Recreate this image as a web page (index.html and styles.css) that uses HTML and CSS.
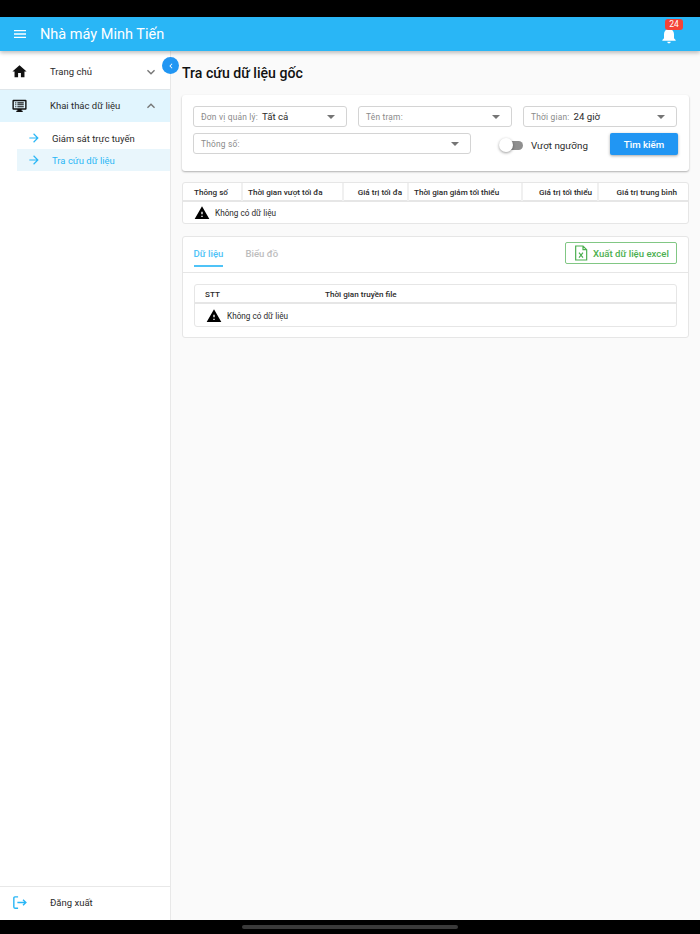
FILE: index.html
```html
<!DOCTYPE html>
<html lang="vi">
<head>
    <meta charset="UTF-8">
    <title>Tra cứu dữ liệu gốc</title>
    <link rel="stylesheet" href="styles.css">
</head>
<body>
    <div class="status-bar"></div>
    <header class="app-bar">
        <svg class="menu-icon" viewBox="0 0 24 24"><path d="M3 18h18v-2H3v2zm0-5h18v-2H3v2zm0-7v2h18V6H3z"/></svg>
        <div class="app-title">Nhà máy Minh Tiến</div>
        <div class="bell">
            <svg viewBox="0 0 24 24"><path d="M12 22c1.1 0 2-.9 2-2h-4c0 1.100.9 2 2 2zm6-6v-5c0-3.070-1.630-5.640-4.500-6.320V4c0-.83-.67-1.500-1.500-1.500s-1.500.67-1.500 1.500v.68C7.640 5.360 6 7.920 6 11v5l-2 2v1h16v-1l-2-2z"/></svg>
            <span class="bell-badge">24</span>
        </div>
    </header>
    <div class="main">
        <aside class="sidebar">
            <div class="nav-item nav-item-first">
                <svg class="nav-icon" viewBox="0 0 24 24"><path d="M10 20v-6h4v6h5v-8h3L12 3 2 12h3v8z"/></svg>
                <span class="nav-label">Trang chủ</span>
                <svg class="nav-chevron" viewBox="0 0 24 24"><path d="M7.410 8.590 12 13.170l4.590-4.580L18 10l-6 6-6-6z"/></svg>
            </div>
            <div class="nav-item nav-item-open">
                <svg class="nav-icon" viewBox="0 0 24 24"><path d="M3.500 4h17A1.500 1.500 0 0 1 22 5.500v11a1.500 1.500 0 0 1-1.500 1.500H15v1.500h1.500V21h-9v-1.500H9V18H3.500A1.500 1.500 0 0 1 2 16.500v-11A1.500 1.500 0 0 1 3.500 4zM4 6v10h16V6H4zm2 1.500h1.500V9H6zm3 0h9V9H9zM6 10.300h1.500v1.500H6zm3 0h9v1.500H9zM6 13h1.500v1.500H6zm3 0h9v1.500H9z"/></svg>
                <span class="nav-label">Khai thác dữ liệu</span>
                <svg class="nav-chevron" viewBox="0 0 24 24"><path d="M7.410 15.410 12 10.830l4.590 4.580L18 14l-6-6-6 6z"/></svg>
            </div>
            <div class="sub-nav">
                <div class="sub-item">
                    <svg class="sub-icon" viewBox="0 0 24 24"><path d="M12 4l-1.410 1.410L16.170 11H4v2h12.170l-5.580 5.590L12 20l8-8z"/></svg>
                    Giám sát trực tuyến
                </div>
                <div class="sub-item sub-item-active">
                    <svg class="sub-icon" viewBox="0 0 24 24"><path d="M12 4l-1.410 1.410L16.170 11H4v2h12.170l-5.580 5.590L12 20l8-8z"/></svg>
                    Tra cứu dữ liệu
                </div>
            </div>
            <div class="nav-item nav-logout">
                <svg class="nav-icon logout-icon" viewBox="0 0 24 24"><path d="M10 4H5.500A1.500 1.500 0 0 0 4 5.500v13A1.500 1.500 0 0 0 5.500 20H10M9 12h12M17 8l4 4-4 4"/></svg>
                <span class="nav-label">Đăng xuất</span>
            </div>
            <button class="collapse-btn">
                <svg viewBox="0 0 24 24"><path d="M15.410 7.410 14 6l-6 6 6 6 1.410-1.410L10.830 12z"/></svg>
            </button>
        </aside>
        <main class="content">
            <h1 class="page-title">Tra cứu dữ liệu gốc</h1>

            <section class="card filter-card">
                <div class="filter-row">
                    <div class="select">
                        <span class="select-label">Đơn vị quản lý:</span>
                        <span class="select-value">Tất cả</span>
                        <span class="caret"></span>
                    </div>
                    <div class="select">
                        <span class="select-label">Tên trạm:</span>
                        <span class="caret"></span>
                    </div>
                    <div class="select">
                        <span class="select-label">Thời gian:</span>
                        <span class="select-value">24 giờ</span>
                        <span class="caret"></span>
                    </div>
                </div>
                <div class="filter-row filter-row-2">
                    <div class="select select-wide">
                        <span class="select-label">Thông số:</span>
                        <span class="caret"></span>
                    </div>
                    <div class="threshold">
                        <span class="switch"><span class="switch-knob"></span></span>
                        <span class="threshold-label">Vượt ngưỡng</span>
                    </div>
                    <button class="search-btn">Tìm kiếm</button>
                </div>
            </section>

            <section class="table-box summary-table">
                <div class="table-head summary-cols">
                    <div class="th">Thông số</div>
                    <div class="th">Thời gian vượt tối đa</div>
                    <div class="th th-right">Giá trị tối đa</div>
                    <div class="th">Thời gian giảm tối thiểu</div>
                    <div class="th th-right">Giá trị tối thiểu</div>
                    <div class="th th-right">Giá trị trung bình</div>
                </div>
                <div class="empty-row">
                    <svg class="warn-icon" viewBox="0 0 24 24"><path d="M1 21h22L12 2 1 21zm12-3h-2v-2h2v2zm0-4h-2v-4h2v4z"/></svg>
                    Không có dữ liệu
                </div>
            </section>

            <section class="card data-card">
                <div class="tabs-bar">
                    <div class="tab tab-active">Dữ liệu</div>
                    <div class="tab">Biểu đồ</div>
                    <button class="excel-btn">
                        <svg class="excel-icon" viewBox="0 0 24 24"><path class="excel-sheet" d="M4 1.500h11l5.500 5.500v15.500H4zM15 1.500V7h5.500"/><path class="excel-x" d="M9 11.500l6 7.500M15 11.500 9 19"/></svg>
                        Xuất dữ liệu excel
                    </button>
                </div>
                <div class="data-body">
                    <div class="table-box">
                        <div class="table-head data-cols">
                            <div class="th">STT</div>
                            <div class="th">Thời gian truyền file</div>
                        </div>
                        <div class="empty-row">
                            <svg class="warn-icon" viewBox="0 0 24 24"><path d="M1 21h22L12 2 1 21zm12-3h-2v-2h2v2zm0-4h-2v-4h2v4z"/></svg>
                            Không có dữ liệu
                        </div>
                    </div>
                </div>
            </section>
        </main>
    </div>
    <div class="nav-bar"><span class="home-pill"></span></div>
</body>
</html>
```

FILE: styles.css
```css
* {
    box-sizing: border-box;
}

body {
    font-family: Roboto, "Liberation Sans", sans-serif;
    margin: 0;
    height: 934px;
    display: flex;
    flex-direction: column;
    background-color: #fafafa;
    color: #2b2b2b;
    overflow: hidden;
}

.status-bar {
    height: 17px;
    background-color: #000;
}

.app-bar {
    height: 34px;
    display: flex;
    align-items: center;
    padding: 0 21px 0 12px;
    background-color: #29b6f6;
    color: #fff;
    box-shadow: 0 2px 4px rgba(0,0,0,0.25);
    position: relative;
    z-index: 2;
}

.menu-icon {
    width: 16px;
    height: 16px;
    fill: #fff;
}

.app-title {
    font-size: 14.5px;
    margin-left: 12px;
    flex: 1;
}

.bell {
    width: 20px;
    height: 20px;
    position: relative;
    margin-top: 1px;
}

.bell svg {
    width: 20px;
    height: 20px;
    fill: #fff;
    display: block;
}

.bell-badge {
    position: absolute;
    top: -6px;
    left: 6px;
    width: 18px;
    height: 11px;
    background-color: #f44336;
    border-radius: 3px;
    font-size: 8.5px;
    line-height: 11px;
    text-align: center;
}

.main {
    flex: 1;
    display: flex;
    min-height: 0;
}

.sidebar {
    width: 171px;
    background-color: #fff;
    border-right: 1px solid #e8e8e8;
    display: flex;
    flex-direction: column;
    position: relative;
}

.nav-item {
    height: 32px;
    display: flex;
    align-items: center;
    padding: 0 11px;
    font-size: 9.5px;
}

.nav-item-first {
    height: 39px;
    padding-top: 3px;
    border-bottom: 1px solid #dfe6ea;
}

.nav-item-open {
    background-color: #e1f5fe;
    padding-bottom: 1px;
}

.nav-icon {
    width: 17px;
    height: 17px;
    fill: #111;
    flex: none;
}

.nav-label {
    margin-left: 22px;
    flex: 1;
}

.nav-chevron {
    width: 16px;
    height: 16px;
    fill: #757575;
}

.sub-nav {
    padding: 5px 0 0 17px;
    flex: 1;
}

.sub-item {
    height: 22px;
    display: flex;
    align-items: center;
    padding-left: 10px;
    gap: 11px;
    font-size: 9.5px;
}

.sub-item-active {
    background-color: #e9f6fc;
    color: #29b6f6;
}

.sub-icon {
    width: 14px;
    height: 14px;
    fill: #29b6f6;
    flex: none;
}

.nav-logout {
    height: 34px;
    padding-bottom: 2px;
    border-top: 1px solid #e8e8e8;
}

.logout-icon {
    fill: none;
    stroke: #29b6f6;
    stroke-width: 2;
}

.collapse-btn {
    position: absolute;
    top: 6px;
    right: -9px;
    width: 17px;
    height: 17px;
    padding: 0;
    border: none;
    border-radius: 50%;
    background-color: #2196f3;
    display: flex;
    align-items: center;
    justify-content: center;
}

.collapse-btn svg {
    width: 10px;
    height: 10px;
    fill: #fff;
}

.content {
    flex: 1;
    padding: 0 11px;
    min-width: 0;
}

.page-title {
    font-size: 14.1px;
    font-weight: 500;
    line-height: 20px;
    margin: 12px 0;
    color: #111;
}

.card {
    background-color: #fff;
    border-radius: 3px;
}

.filter-card {
    height: 76px;
    padding: 11px 11px 0;
    box-shadow: 0 1px 2px rgba(0,0,0,0.3);
}

.filter-row {
    display: grid;
    grid-template-columns: repeat(3, 154px);
    gap: 11px;
    margin-bottom: 6px;
}

.filter-row-2 {
    display: flex;
    gap: 0;
}

.select {
    height: 21px;
    border: 1px solid #d4d4d4;
    border-radius: 3px;
    display: flex;
    align-items: center;
    padding: 0 11px 0 7px;
    font-size: 9.7px;
}

.select-wide {
    width: 278px;
}

.select-label {
    font-size: 8.4px;
    color: #8a8a8a;
    letter-spacing: 0.2px;
    margin-right: 4px;
}

.caret {
    margin-left: auto;
    width: 0;
    height: 0;
    border-left: 4px solid transparent;
    border-right: 4px solid transparent;
    border-top: 4px solid #757575;
}

.threshold {
    width: 139px;
    display: flex;
    align-items: center;
    padding-left: 29px;
    margin-top: 3px;
}

.switch {
    width: 23px;
    height: 9px;
    background-color: #8f8f8f;
    border-radius: 5px;
    position: relative;
    margin-right: 8px;
}

.switch-knob {
    position: absolute;
    left: -1px;
    top: -3px;
    width: 14px;
    height: 14px;
    border-radius: 50%;
    background-color: #fff;
    box-shadow: 0 1px 3px rgba(0,0,0,0.4);
}

.threshold-label {
    font-size: 9.8px;
    white-space: nowrap;
}

.search-btn {
    width: 68px;
    height: 22px;
    border: none;
    border-radius: 2px;
    background-color: #2196f3;
    color: #fff;
    font-family: inherit;
    font-size: 9.7px;
    font-weight: 500;
    box-shadow: 0 1px 3px rgba(0,0,0,0.35);
    padding: 0;
}

.table-box {
    background-color: #fff;
    border: 1px solid #e6e6e6;
    border-radius: 3px;
}

.summary-table {
    margin-top: 11px;
}

.table-head {
    display: grid;
    height: 19px;
    border-bottom: 2px solid #e6e6e6;
}

.summary-cols {
    grid-template-columns: 60px 101px 65px 114px 76px 1fr;
}

.data-cols {
    grid-template-columns: 120px 1fr;
}

.th {
    font-size: 8.1px;
    font-weight: 500;
    line-height: 18px;
    padding: 0 5px;
    border-right: 2px solid #f0f0f0;
    white-space: nowrap;
}

.th:first-child {
    padding-left: 11px;
}

.th:last-child {
    border-right: none;
    padding-right: 11px;
}

.th-right {
    text-align: right;
}

.data-cols .th {
    border-right: none;
    padding: 0 0 0 10px;
}

.empty-row {
    height: 21px;
    display: flex;
    align-items: center;
    padding: 1px 0 0 11px;
    gap: 5px;
    font-size: 8.2px;
}

.data-cols + .empty-row {
    height: 22px;
}

.warn-icon {
    width: 16px;
    height: 16px;
    fill: #000;
    flex: none;
}

.data-card {
    height: 102px;
    margin-top: 12px;
    border: 1px solid #e6e6e6;
}

.tabs-bar {
    height: 36px;
    display: flex;
    align-items: stretch;
    padding: 0 11px 0 10.500px;
    border-bottom: 1px solid #e6e6e6;
}

.tab {
    font-size: 9.6px;
    font-weight: 500;
    line-height: 34px;
    color: #bdbdbd;
    margin-right: 22px;
    height: 30px;
}

.tab-active {
    color: #4fc3f7;
    border-bottom: 2px solid #4fc3f7;
}

.excel-btn {
    margin: 5px 0 0 auto;
    width: 112px;
    height: 22px;
    background-color: #fff;
    border: 1px solid #81c784;
    border-radius: 2px;
    color: #4caf50;
    font-family: inherit;
    font-size: 9.6px;
    font-weight: 500;
    display: flex;
    align-items: center;
    gap: 4px;
    padding: 0 0 0 7px;
}

.excel-icon {
    width: 16px;
    height: 16px;
    fill: none;
    stroke: #4caf50;
    stroke-width: 1.8;
}

.data-body {
    padding: 11px;
}

.nav-bar {
    height: 14px;
    background-color: #000;
    display: flex;
    justify-content: center;
    align-items: center;
}

.home-pill {
    width: 216px;
    height: 4px;
    border-radius: 2px;
    background-color: #3a3a3a;
}
```
